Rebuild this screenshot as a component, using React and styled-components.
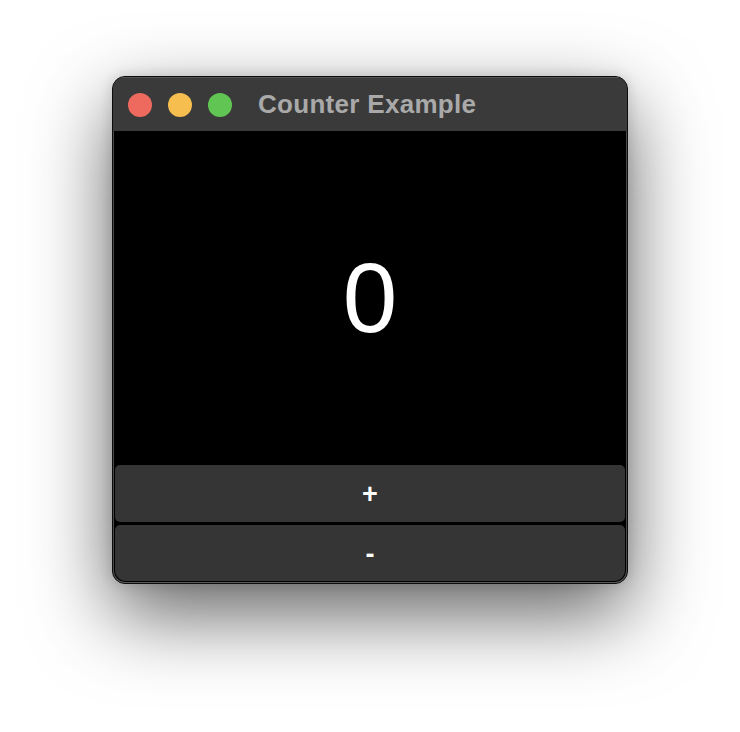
import { useState } from "react";
import styled, { createGlobalStyle } from "styled-components";

const GlobalStyle = createGlobalStyle`
  html, body {
    margin: 0;
    padding: 0;
    background: #ffffff;
    font-family: "Liberation Sans", Arial, sans-serif;
  }
`;

const Page = styled.div`
  width: 740px;
  height: 732px;
  display: flex;
  justify-content: center;
  align-items: flex-start;
  padding-top: 76px;
  box-sizing: border-box;
  overflow: hidden;
`;

const Window = styled.div`
  width: 516px;
  height: 508px;
  box-sizing: border-box;
  border: 1px solid #0c0c0c;
  border-radius: 13px;
  background: #000;
  overflow: hidden;
  display: flex;
  flex-direction: column;
  box-shadow: inset 0 0 0 1px #5a5a5a, 0 30px 80px rgba(0, 0, 0, 0.62),
    0 0 14px rgba(0, 0, 0, 0.15);
`;

const TitleBar = styled.div`
  height: 54px;
  flex: none;
  background: #3a3a3a;
  display: flex;
  align-items: center;
  padding-left: 15px;
  border-top: 1px solid #555;
  box-sizing: border-box;
`;

const Lights = styled.div`
  display: flex;
  gap: 16px;
  margin-right: 26px;
`;

const Light = styled.span`
  width: 24px;
  height: 24px;
  border-radius: 50%;
  background: ${(p) => p.$color};
`;

const Title = styled.div`
  color: #a9a9a9;
  font-weight: 700;
  font-size: 26px;
  letter-spacing: 0.3px;
  margin-top: -1px;
`;

const Display = styled.div`
  height: 334px;
  flex: none;
  display: flex;
  align-items: center;
  justify-content: center;
  color: #fff;
  font-size: 98px;
  font-weight: 400;
  border-left: 1px solid #4a4a4a;
  border-right: 1px solid #4a4a4a;
`;

const Buttons = styled.div`
  flex: 1;
  display: flex;
  flex-direction: column;
  gap: 3px;
  padding: 0 1px 1px;
  border-left: 1px solid #4a4a4a;
  border-right: 1px solid #4a4a4a;
  border-bottom: 1px solid #5a5a5a;
  border-radius: 0 0 12px 12px;
`;

const Button = styled.button`
  flex: 1;
  border: none;
  background: #353535;
  color: #fff;
  font-family: "Liberation Sans", Arial, sans-serif;
  font-weight: 700;
  font-size: 27px;
  line-height: 1;
  border-radius: ${(p) => (p.$last ? "5px 5px 11px 11px" : "5px")};
  padding: 3px 0 0;
  cursor: pointer;
`;

export default function App() {
  const [count, setCount] = useState(0);
  return (
    <>
      <GlobalStyle />
      <Page>
        <Window>
          <TitleBar>
            <Lights>
              <Light $color="#ee6a5f" />
              <Light $color="#f6be4f" />
              <Light $color="#61c554" />
            </Lights>
            <Title>Counter Example</Title>
          </TitleBar>
          <Display>{count}</Display>
          <Buttons>
            <Button onClick={() => setCount(count + 1)}>+</Button>
            <Button $last onClick={() => setCount(count - 1)}>-</Button>
          </Buttons>
        </Window>
      </Page>
    </>
  );
}
